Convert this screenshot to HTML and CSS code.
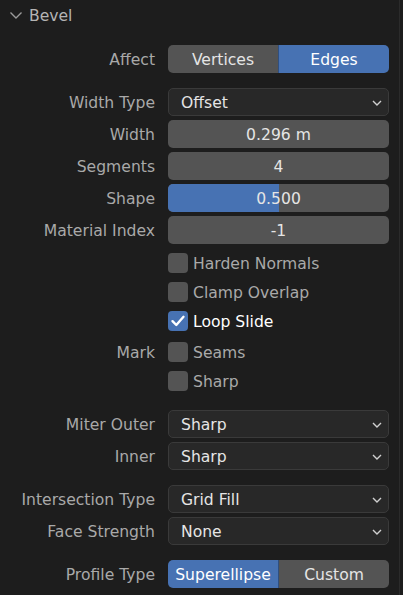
FILE: index.html
```html
<!DOCTYPE html>
<html>
<head>
<meta charset="utf-8">
<link rel="stylesheet" href="styles.css">
</head>
<body>
<div class="panel">
  <div class="header">
    <svg class="hchev" width="14" height="9" viewBox="0 0 14 9"><path d="M1.5 1.5 L7 7 L12.5 1.5" fill="none" stroke="#9a9a9a" stroke-width="1.4"/></svg>
    <span class="htitle">Bevel</span>
  </div>
  <div class="body">
    <div class="group">
      <div class="row"><div class="label">Affect</div>
        <div class="seg"><div class="segbtn">Vertices</div><div class="segbtn on">Edges</div></div>
      </div>
    </div>
    <div class="group">
      <div class="row"><div class="label">Width Type</div>
        <div class="menu"><span>Offset</span><svg class="dchev" width="10" height="6" viewBox="0 0 10 6"><path d="M1 1 L5 5 L9 1" fill="none" stroke="#d0d0d0" stroke-width="1.4"/></svg></div>
      </div>
      <div class="row"><div class="label">Width</div><div class="num">0.296 m</div></div>
      <div class="row"><div class="label">Segments</div><div class="num">4</div></div>
      <div class="row"><div class="label">Shape</div><div class="num slider"><div class="fill" style="width:50%"></div><span>0.500</span></div></div>
      <div class="row"><div class="label">Material Index</div><div class="num">-1</div></div>
      <div class="crow"><div class="label"></div><div class="check"><div class="box"></div><span>Harden Normals</span></div></div>
      <div class="crow tight"><div class="label"></div><div class="check"><div class="box"></div><span>Clamp Overlap</span></div></div>
      <div class="crow tight"><div class="label"></div><div class="check on"><div class="box"><svg width="20" height="20" viewBox="0 0 20 20"><path d="M4.5 10.2 L8.3 14 L15.5 5.8" fill="none" stroke="#ffffff" stroke-width="2.4" stroke-linecap="round" stroke-linejoin="round"/></svg></div><span>Loop Slide</span></div></div>
    </div>
    <div class="group mark">
      <div class="crow"><div class="label">Mark</div><div class="check"><div class="box"></div><span>Seams</span></div></div>
      <div class="crow"><div class="label"></div><div class="check"><div class="box"></div><span>Sharp</span></div></div>
    </div>
    <div class="group">
      <div class="row"><div class="label">Miter Outer</div>
        <div class="menu"><span>Sharp</span><svg class="dchev" width="10" height="6" viewBox="0 0 10 6"><path d="M1 1 L5 5 L9 1" fill="none" stroke="#d0d0d0" stroke-width="1.4"/></svg></div>
      </div>
      <div class="row"><div class="label">Inner</div>
        <div class="menu"><span>Sharp</span><svg class="dchev" width="10" height="6" viewBox="0 0 10 6"><path d="M1 1 L5 5 L9 1" fill="none" stroke="#d0d0d0" stroke-width="1.4"/></svg></div>
      </div>
    </div>
    <div class="group">
      <div class="row"><div class="label">Intersection Type</div>
        <div class="menu"><span>Grid Fill</span><svg class="dchev" width="10" height="6" viewBox="0 0 10 6"><path d="M1 1 L5 5 L9 1" fill="none" stroke="#d0d0d0" stroke-width="1.4"/></svg></div>
      </div>
      <div class="row"><div class="label">Face Strength</div>
        <div class="menu"><span>None</span><svg class="dchev" width="10" height="6" viewBox="0 0 10 6"><path d="M1 1 L5 5 L9 1" fill="none" stroke="#d0d0d0" stroke-width="1.4"/></svg></div>
      </div>
    </div>
    <div class="group">
      <div class="row"><div class="label">Profile Type</div>
        <div class="seg"><div class="segbtn on">Superellipse</div><div class="segbtn">Custom</div></div>
      </div>
    </div>
  </div>
</div>
</body>
</html>
```
FILE: styles.css
```css
html, body {
  margin: 0;
  padding: 0;
  background: #1d1d1d;
}
body {
  font-family: "DejaVu Sans", sans-serif;
  font-size: 15.6px;
  color: #e5e5e5;
  width: 403px;
  height: 595px;
  overflow: hidden;
}
.panel {
  width: 400px;
  height: 595px;
  border-right: 1px solid #2b2b2b;
  box-sizing: border-box;
}
.header {
  height: 32px;
  display: flex;
  align-items: center;
  padding-left: 9px;
  gap: 6px;
}
.hchev {
  display: block;
  margin-top: -2px;
}
.htitle {
  color: #b4b4b4;
  margin-top: -1px;
}
.body {
  padding-top: 13px;
}
.group {
  display: flex;
  flex-direction: column;
  gap: 4px;
  margin-bottom: 15px;
}
.group.mark {
  gap: 0;
  margin-top: -13px;
}
.row, .crow {
  display: grid;
  grid-template-columns: 155px 221px;
  column-gap: 13px;
  height: 28px;
  align-items: center;
}
.crow {
  height: 29px;
}
.crow.tight {
  margin-top: -4px;
}
.label {
  text-align: right;
  color: #a9a9a9;
  white-space: nowrap;
  padding-top: 2px;
}
.seg {
  display: flex;
  height: 28px;
  border-radius: 5px;
  overflow: hidden;
}
.segbtn {
  flex: 1;
  background: #545454;
  display: flex;
  align-items: center;
  justify-content: center;
  color: #e5e5e5;
  padding-top: 2px;
}
.segbtn.on {
  background: #4772b3;
  color: #ffffff;
}
.segbtn + .segbtn {
  border-left: 1px solid #3a3a3a;
}
.seg .segbtn.on + .segbtn, .seg .segbtn + .segbtn.on {
  border-left: 1px solid #2f4f80;
}
.menu {
  height: 28px;
  box-sizing: border-box;
  background: #282828;
  border: 1px solid #3a3a3a;
  border-radius: 5px;
  display: flex;
  align-items: center;
  justify-content: space-between;
  padding: 2px 6px 0 12px;
  color: #e5e5e5;
}
.dchev {
  display: block;
  margin-top: -1px;
}
.num {
  height: 28px;
  box-sizing: border-box;
  padding-top: 2px;
  background: #545454;
  border-radius: 5px;
  display: flex;
  align-items: center;
  justify-content: center;
  color: #e5e5e5;
  position: relative;
  overflow: hidden;
}
.slider .fill {
  position: absolute;
  left: 0;
  top: 0;
  bottom: 0;
  background: #4772b3;
}
.slider span {
  position: relative;
}
.check {
  display: flex;
  align-items: center;
  gap: 5px;
  color: #a9a9a9;
}
.check span {
  padding-top: 2px;
}
.check.on {
  color: #ffffff;
}
.box {
  width: 20px;
  height: 20px;
  border-radius: 4px;
  background: #545454;
  flex: none;
}
.check.on .box {
  background: #4772b3;
}
.box svg {
  display: block;
}
```
